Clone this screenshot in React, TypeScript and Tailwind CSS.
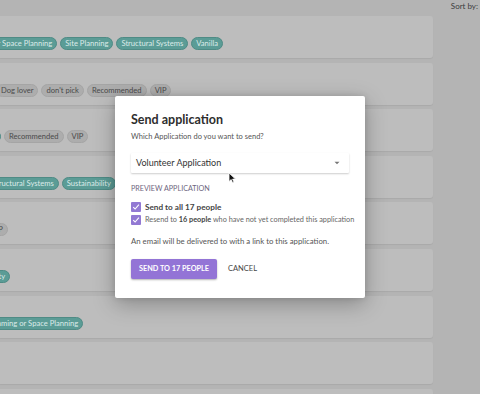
import React from "react";

type Tag = { label: string; teal?: boolean };

interface Row {
  offset: number; // left shift so the first tags fall off-screen
  tags: Tag[];
}

const rows: Row[] = [
  {
    offset: -58,
    tags: [
      { label: "Programming or Space Planning", teal: true },
      { label: "Site Planning", teal: true },
      { label: "Structural Systems", teal: true },
      { label: "Vanilla", teal: true },
    ],
  },
  {
    offset: -4,
    tags: [
      { label: "Dog lover" },
      { label: "don't pick" },
      { label: "Recommended" },
      { label: "VIP" },
    ],
  },
  {
    offset: -50,
    tags: [
      { label: "Accessibility", teal: true },
      { label: "Recommended" },
      { label: "VIP" },
    ],
  },
  {
    offset: -13,
    tags: [
      { label: "Structural Systems", teal: true },
      { label: "Sustainability", teal: true },
    ],
  },
  { offset: -14, tags: [{ label: "VIP" }] },
  { offset: -44, tags: [{ label: "Sustainability", teal: true }] },
  {
    offset: -32,
    tags: [{ label: "Programming or Space Planning", teal: true }],
  },
  { offset: 0, tags: [] },
  { offset: 0, tags: [] },
];

const TagPill: React.FC<{ tag: Tag }> = ({ tag }) => (
  <span
    className={
      tag.teal
        ? "h-[13px] px-[4px] rounded-full border border-[#4f8b85] bg-[#5b9c96] text-[#dcebe9] text-[7.6px] leading-[11px] whitespace-nowrap"
        : "h-[13px] px-[4px] rounded-full border border-[#a5a5a5] bg-[#adadad] text-[#4a4a4a] text-[7.6px] leading-[11px] whitespace-nowrap"
    }
  >
    {tag.label}
  </span>
);

const CheckBox = () => (
  <span className="w-[10px] h-[10px] rounded-[1px] bg-[#9279d3] flex items-center justify-center shrink-0">
    <svg width="8" height="8" viewBox="0 0 8 8">
      <path d="M1.2 4.2 L3.1 6 L6.9 1.6" stroke="#fff" strokeWidth="1.1" fill="none" />
    </svg>
  </span>
);

export default function App() {
  return (
    <div
      className="relative w-[480px] h-[394px] overflow-hidden bg-[#b4b4b4]"
      style={{ fontFamily: "Lato, 'Open Sans', sans-serif" }}
    >
      {/* top bar */}
      <div className="h-[16px] flex justify-end items-start pr-[2px] pt-[1px]">
        <span className="text-[8px] leading-[10px] text-[#3d3d3d] whitespace-nowrap">Sort by:</span>
      </div>

      {/* list of cards, cut at the left */}
      <div className="w-[433px] flex flex-col gap-[4.6px]">
        {rows.map((row, i) => (
          <div
            key={i}
            className="h-[42px] shrink-0 bg-[#bdbdbd] rounded-r-[3px] shadow-[0_1px_1px_rgba(0,0,0,0.06)] overflow-hidden"
          >
            <div className="flex gap-[3px] pt-[21px]" style={{ marginLeft: row.offset }}>
              {row.tags.map((t, j) => (
                <TagPill key={j} tag={t} />
              ))}
            </div>
          </div>
        ))}
      </div>

      {/* modal */}
      <div className="absolute inset-0 flex items-center justify-center">
        <div className="w-[250px] h-[202px] bg-white rounded-[2px] shadow-[0_6px_22px_rgba(0,0,0,0.28),0_0_6px_rgba(0,0,0,0.12)] px-[16px] pt-[16px] text-[#333]">
          <h2 className="text-[12.5px] leading-[16px] font-bold text-[#2e2e2e]">Send application</h2>
          <p className="mt-[2px] text-[7.5px] leading-[14px] text-[#555]">
            Which Application do you want to send?
          </p>

          <div className="mt-[9px] h-[20px] flex items-center justify-between pl-[5px] pr-[9px] bg-white shadow-[0_1px_2px_rgba(0,0,0,0.2)] rounded-[1px]">
            <span className="text-[9px] text-[#333]">Volunteer Application</span>
            <svg width="6" height="4" viewBox="0 0 6 4">
              <path d="M0.5 0.8 H5.5 L3 3.3 Z" fill="#777" />
            </svg>
          </div>

          <div className="mt-[10px] text-[7.2px] leading-[12px] text-[#6e6680] uppercase">
            Preview application
          </div>

          <div className="mt-[6px] flex flex-col gap-[1px]">
            <label className="h-[12px] flex items-center gap-[4px] text-[8.2px] text-[#444]">
              <CheckBox />
              <span className="font-bold">Send to all 17 people</span>
            </label>
            <label className="h-[12px] flex items-center gap-[4px] text-[7.3px] text-[#666] whitespace-nowrap">
              <CheckBox />
              <span>
                Resend to <b className="text-[#444]">16 people</b> who have not yet completed this application
              </span>
            </label>
          </div>

          <p className="mt-[9px] text-[7.8px] leading-[12px] text-[#555]">
            An email will be delivered to with a link to this application.
          </p>

          <div className="mt-[12px] flex items-center gap-[11px]">
            <button className="h-[20px] px-[8px] rounded-[2px] bg-[#9374d6] text-white text-[7.3px] font-bold uppercase shadow-[0_1px_2px_rgba(0,0,0,0.3)] whitespace-nowrap">
              Send to 17 people
            </button>
            <button className="text-[7.5px] text-[#444] uppercase">Cancel</button>
          </div>
        </div>
      </div>

      {/* mouse pointer */}
      <svg className="absolute left-[228px] top-[172px]" width="9" height="12" viewBox="0 0 9 12">
        <path d="M1 1 L1 9.5 L3.2 7.6 L4.6 10.8 L6 10.2 L4.6 7.1 L7.5 7.1 Z" fill="#111" stroke="#fff" strokeWidth="0.8" />
      </svg>
    </div>
  );
}
